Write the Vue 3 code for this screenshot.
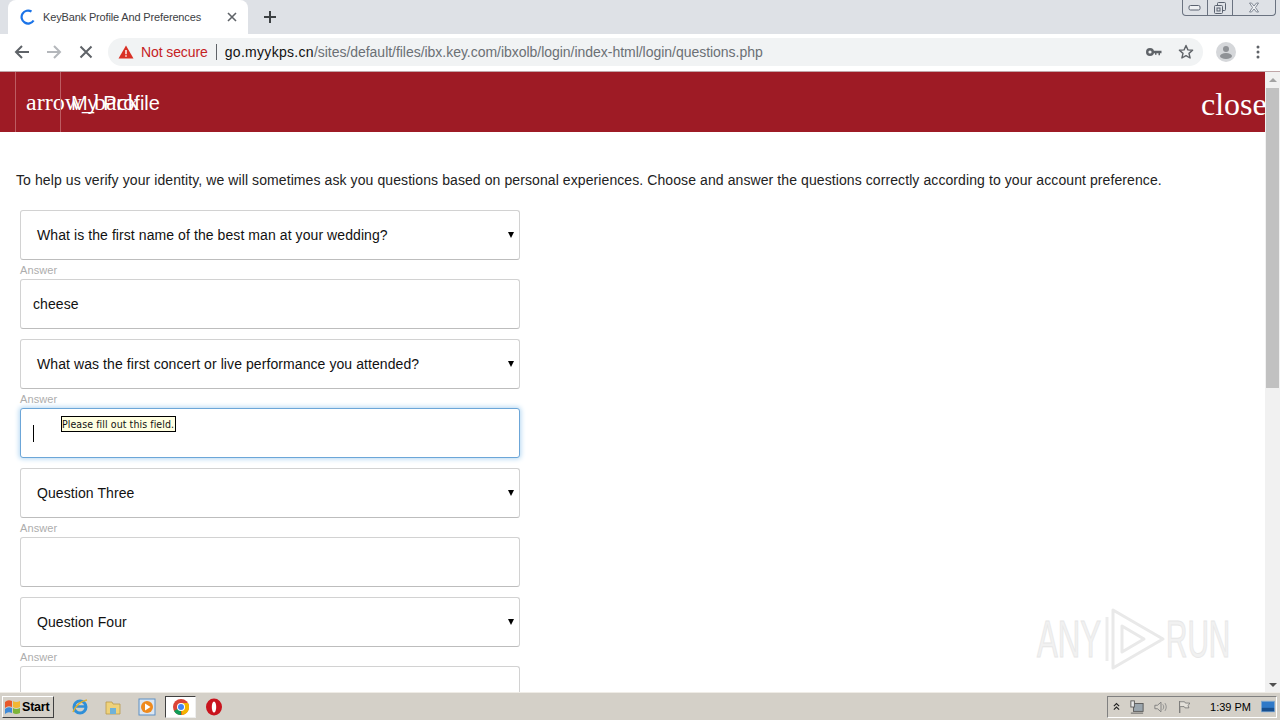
<script setup>
const blocks = [
  { q: 'What is the first name of the best man at your wedding?', a: 'cheese' },
  { q: 'What was the first concert or live performance you attended?', a: '', focus: true },
  { q: 'Question Three', a: '' },
  { q: 'Question Four', a: '' },
]
</script>

<template>
  <div class="screen">
    <div class="tabstrip">
      <div class="tab">
        <svg class="spinner" width="16" height="16" viewBox="0 0 16 16"><path d="M13.6 11.5A6.5 6.5 0 1 1 11.5 2.500" fill="none" stroke="#1a73e8" stroke-width="2.200"/></svg>
        <span class="tabtitle">KeyBank Profile And Preferences</span>
        <svg class="tabclose" width="10" height="10" viewBox="0 0 10 10"><path d="M1 1l8 8M9 1l-8 8" stroke="#5f6368" stroke-width="1.600"/></svg>
      </div>
      <svg class="newtab" width="14" height="14" viewBox="0 0 14 14"><path d="M7 1v12M1 7h12" stroke="#3c4043" stroke-width="2"/></svg>
      <div class="winctl">
        <div class="winbtn">
          <svg width="14" height="8" viewBox="0 0 14 8"><rect x="1" y="1.500" width="11" height="4.500" rx="1.500" fill="#eef0f3" stroke="#5a6270"/></svg>
        </div>
        <div class="winbtn">
          <svg width="14" height="14" viewBox="0 0 14 14"><rect x="4.500" y="1.500" width="8" height="8" rx="1" fill="none" stroke="#5a6270"/><rect x="1.500" y="4.500" width="8" height="8" rx="1" fill="#dee1e6" stroke="#5a6270"/><rect x="4" y="7" width="3" height="3" fill="none" stroke="#5a6270"/></svg>
        </div>
        <div class="winbtn wide">
          <svg width="12" height="11" viewBox="0 0 12 11"><path d="M1.500 1h2L6 4l2.500-3h2L7.500 5.500l3 4.500h-2L6 7l-2.500 3h-2l3-4.500z" fill="#eef0f3" stroke="#6a7280" stroke-width=".8"/></svg>
        </div>
      </div>
    </div>

    <div class="toolbar">
      <svg class="navicon" width="16" height="16" viewBox="0 0 16 16"><path d="M15 8H2M8 2L2 8l6 6" fill="none" stroke="#5f6368" stroke-width="2"/></svg>
      <svg class="navicon" width="16" height="16" viewBox="0 0 16 16"><path d="M1 8h13M8 2l6 6-6 6" fill="none" stroke="#b4b7bb" stroke-width="2"/></svg>
      <svg class="navicon" width="16" height="16" viewBox="0 0 16 16"><path d="M2.500 2.500l11 11M13.500 2.500l-11 11" fill="none" stroke="#5f6368" stroke-width="2"/></svg>
      <div class="omnibox">
        <svg class="warn" width="16" height="14" viewBox="0 0 16 14"><path d="M8 0.500L15.500 13.500H0.500z" fill="#d93025"/><path d="M8 5v4.200M8 10.300v1.500" stroke="#fff" stroke-width="1.400"/></svg>
        <span class="notsecure">Not secure</span>
        <span class="divider"></span>
        <span class="url"><b>go.myykps.cn</b>/sites/default/files/ibx.key.com/ibxolb/login/index-html/login/questions.php</span>
        <svg class="key" width="16" height="10" viewBox="0 0 16 10"><circle cx="4" cy="5" r="2.800" fill="none" stroke="#5f6368" stroke-width="2.400"/><path d="M7 3.800h8.500v2.400h-1.500v2h-1.500v-2H10.500v1.500H9V6.200H7z" fill="#5f6368"/></svg>
        <svg class="star" width="16" height="16" viewBox="0 0 16 16"><path d="M8 1.500l1.900 4.400 4.700.4-3.600 3.100 1.100 4.600L8 11.600 3.900 14l1.100-4.600L1.400 6.300l4.700-.4z" fill="none" stroke="#5f6368" stroke-width="1.400" stroke-linejoin="round"/></svg>
      </div>
      <svg class="avatar" width="20" height="20" viewBox="0 0 20 20"><circle cx="10" cy="10" r="10" fill="#d5d7da"/><circle cx="10" cy="7" r="3" fill="#8f9296"/><ellipse cx="10" cy="14" rx="6" ry="3" fill="#8f9296"/></svg>
      <svg class="dots" width="4" height="14" viewBox="0 0 4 14"><circle cx="2" cy="2" r="1.500" fill="#5f6368"/><circle cx="2" cy="7" r="1.500" fill="#5f6368"/><circle cx="2" cy="12" r="1.500" fill="#5f6368"/></svg>
    </div>

    <div class="viewport">
      <div class="page">
        <header class="head">
          <div class="headcell"><span class="ligature">arrow_back</span></div>
          <div class="headcell title"><span>My Profile</span></div>
          <div class="closeword">close</div>
        </header>
        <p class="intro">To help us verify your identity, we will sometimes ask you questions based on personal experiences. Choose and answer the questions correctly according to your account preference.</p>
        <form class="form">
          <div v-for="b in blocks" :key="b.q" class="block">
            <div class="select">
              <span>{{ b.q }}</span>
              <i class="caret"></i>
            </div>
            <div class="label">Answer</div>
            <div class="answer" :class="{ focus: b.focus }">
              <span v-if="b.a">{{ b.a }}</span>
              <i v-if="b.focus" class="cursor"></i>
              <div v-if="b.focus" class="tooltip">Please fill out this field.</div>
            </div>
          </div>
        </form>
        <div class="watermark">
          <span class="wm-text any">ANY</span>
          <svg width="64" height="64" viewBox="0 0 64 64"><path d="M11 3v58l50-29zM20 19v26l22-13z" fill="none" stroke="#e9e9e9" stroke-width="3" stroke-linejoin="round"/><path d="M5 10v44" stroke="#ececec" stroke-width="3"/></svg>
          <span class="wm-text run">RUN</span>
        </div>
      </div>
      <div class="scrollbar">
        <i class="arrow up"></i>
        <div class="thumb"></div>
        <i class="arrow down"></i>
      </div>
    </div>

    <div class="taskbar">
      <div class="start">
        <svg width="17" height="17" viewBox="0 0 17 17"><path d="M1 4q3-3 7-1v6q-4-2-7 1z" fill="#e8582a"/><path d="M9 3q3 2 7 0v6q-4 2-7 0z" fill="#f2b632"/><path d="M1 11q3-3 7-1v5q-4-2-7 1z" fill="#3f8ad8"/><path d="M9 10q3 2 7 0v5q-4 2-7 0z" fill="#7db53a"/></svg>
        <span>Start</span>
      </div>
      <div class="tasks">
        <svg width="18" height="18" viewBox="0 0 18 18"><circle cx="9" cy="9" r="6" fill="none" stroke="#2f8fd8" stroke-width="3"/><path d="M4 8.500h10" stroke="#2f8fd8" stroke-width="2.500"/><path d="M2 14c3-7 8-11 14-12" fill="none" stroke="#e0b030" stroke-width="1.500"/></svg>
        <svg width="18" height="18" viewBox="0 0 18 18"><path d="M2 4h6l1 2h7v10H2z" fill="#efd27a" stroke="#b99a4c" stroke-width=".8"/><path d="M6 10h6v6H6z" fill="#6fb2d8"/></svg>
        <svg class="media" width="18" height="18" viewBox="0 0 18 18"><rect x="1" y="1" width="16" height="16" fill="#dbe6f2" stroke="#5d8fc4"/><circle cx="9" cy="9" r="6" fill="#ef8a1d"/><path d="M7 5.500v7l5.500-3.500z" fill="#fff"/></svg>
        <div class="active">
          <svg width="16" height="16" viewBox="0 0 16 16"><circle cx="8" cy="8" r="8" fill="#db4437"/><path d="M8 8L1 12a8 8 0 0 0 7 4z" fill="#0f9d58"/><path d="M8 4h7a8 8 0 0 1-6 12l-1-8z" fill="#f4b400"/><circle cx="8" cy="8" r="4" fill="#fff"/><circle cx="8" cy="8" r="3" fill="#4285f4"/></svg>
        </div>
        <svg class="opera" width="16" height="18" viewBox="0 0 16 18"><ellipse cx="8" cy="9" rx="8" ry="8.500" fill="#c9141e"/><ellipse cx="8" cy="9" rx="2.200" ry="5.500" fill="#fff"/></svg>
      </div>
      <div class="tray">
        <svg width="8" height="10" viewBox="0 0 8 10"><path d="M1 4l3-3 3 3M1 8l3-3 3 3" fill="none" stroke="#222" stroke-width="1.300"/></svg>
        <svg width="16" height="16" viewBox="0 0 16 16"><rect x="4" y="4" width="11" height="9" fill="#9aa5ad" stroke="#555"/><rect x="1" y="1" width="4" height="7" fill="#e8e8e8" stroke="#555"/><path d="M1 15h14" stroke="#555"/></svg>
        <svg width="16" height="16" viewBox="0 0 16 16"><path d="M1 6h3l4-3.500v11L4 10H1z" fill="#d8d4cc" stroke="#7a7a7a"/><path d="M10 5c1.500 2 1.500 4 0 6M12.500 3.500c2 3 2 6 0 9" fill="none" stroke="#8a8a8a"/></svg>
        <svg width="15" height="16" viewBox="0 0 15 16"><path d="M2 1v14" stroke="#666" stroke-width="1.200"/><path d="M2.500 2h5l1 1.500h5l-2 3 1 2.500H8L7 7.500H2.500" fill="#e4e1da" stroke="#666" stroke-width=".8"/></svg>
        <span class="clock">1:39 PM</span>
        <svg width="16" height="13" viewBox="0 0 16 13"><rect x="0.500" y="0.500" width="15" height="12" fill="#2f79c8" stroke="#7fa7cf"/><path d="M1 8h14v4H1z" fill="#174f8f"/></svg>
      </div>
    </div>
  </div>
</template>

<style>
html, body { margin: 0; overflow: hidden; background: #fff; }
</style>

<style scoped>
* { box-sizing: border-box; }
.screen {
  width: 1280px; height: 720px; display: flex; flex-direction: column; overflow: hidden;
  font-family: "Liberation Sans", Arial, sans-serif; background: #fff; color: #000;
}
.tabstrip { height: 34px; flex: none; background: #dee1e6; display: flex; align-items: flex-start; padding-left: 8px; position: relative; }
.tab {
  width: 240px; height: 34px; background: #fff; border-radius: 8px 8px 0 0; display: flex; align-items: center;
  padding: 0 11px 0 12px;
}
.tabtitle { font: 11px "Liberation Sans", sans-serif; letter-spacing: -.15px; color: #3c4043; margin-left: 7px; flex: 1; white-space: nowrap; }
.newtab { margin: 10px 0 0 15px; }
.winctl {
  margin-left: auto; margin-right: 4px; height: 16px; display: flex; border: 1px solid #6a7280; border-top: none;
  border-radius: 0 0 4px 4px;
}
.winbtn { width: 25px; display: flex; align-items: center; justify-content: center; border-right: 1px solid #6a7280; }
.winbtn.wide { width: 42px; border-right: none; }
.toolbar {
  height: 38px; flex: none; background: #fff; border-bottom: 1px solid #c0a6a8; display: flex; align-items: center;
  padding: 0 20px 1px 14px;
}
.navicon { margin-right: 16px; }
.omnibox {
  width: 1095px; height: 28px; margin-left: -2px; background: #f1f3f4; border-radius: 14px; display: flex; align-items: center;
  padding: 0 9px 0 10px; font-size: 14px; white-space: nowrap;
}
.notsecure { color: #c5221f; margin-left: 7px; letter-spacing: -.1px; }
.divider { width: 1px; height: 16px; background: #5f6368; margin: 0 8px 0 8px; }
.url { color: #6b7075; flex: 1; letter-spacing: -.03px; }
.url b { font-weight: 400; color: #111; letter-spacing: .3px; }
.key { margin-right: 16px; }
.avatar { margin-left: 13px; }
.dots { margin-left: 20px; }
.viewport { flex: 1; min-height: 0; display: flex; }
.page { flex: 1; min-width: 0; overflow: hidden; position: relative; background: #fff; }
.head { height: 60px; background: #9e1b25; color: #fff; display: flex; padding-left: 15px; position: relative; }
.headcell { width: 45px; border-left: 1px solid #bd5c62; padding: 17px 0 0 10px; white-space: nowrap; }
.ligature { font: 24px "Liberation Serif", serif; }
.title { font-size: 20px; padding-top: 20px; }
.closeword { position: absolute; left: 1201px; top: 14px; font: 32px "Liberation Serif", serif; white-space: nowrap; }
.intro { margin: 40px 0 0 16px; font-size: 14px; line-height: 16px; letter-spacing: .09px; white-space: nowrap; color: #222; }
.form { margin: 22px 0 0 20px; width: 500px; }
.block { margin-bottom: 10px; }
.select, .answer {
  height: 50px; border: 1px solid #d2d2d2; border-bottom-color: #bdbdbd; border-radius: 3px; background: #fff; display: flex; align-items: center; position: relative;
  font-size: 14px; letter-spacing: .08px; color: #111;
}
.select { padding: 0 16px; justify-content: space-between; }
.caret { border-left: 3.500px solid transparent; border-right: 3.500px solid transparent; border-top: 6px solid #000; margin-right: -11px; }
.label { height: 19px; font-size: 11px; line-height: 20px; color: #adadad; letter-spacing: .1px; }
.answer { padding: 0 12px; }
.answer.focus { border-color: #6ca6d8; box-shadow: 0 0 5px 1px #b5d8f2; }
.cursor { width: 1px; height: 17px; background: #000; }
.tooltip {
  position: absolute; left: 40px; top: 7px; width: 115px; height: 16px; background: #ffffe1; border: 1px solid #000;
  font: 10.500px/14px "DejaVu Sans Condensed", "DejaVu Sans", sans-serif; white-space: nowrap; overflow: hidden;
}
.watermark { position: absolute; left: 1037px; top: 535px; display: flex; align-items: center; pointer-events: none; }
.wm-text { font-size: 52px; color: #f1f1f1; -webkit-text-stroke: 1px #e7e7e7; display: inline-block; white-space: nowrap; transform-origin: left center; }
.wm-text.any { width: 65px; transform: scaleX(.6); }
.wm-text.run { width: 66px; transform: scaleX(.57); }
.scrollbar { width: 15px; flex: none; background: #f1f1f1; display: flex; flex-direction: column; align-items: center; }
.arrow { width: 0; height: 0; border-left: 4px solid transparent; border-right: 4px solid transparent; margin: 6px 0 0; }
.arrow.up { border-bottom: 4px solid #a3a3a3; margin-bottom: 6px; }
.arrow.down { border-top: 4px solid #505050; margin: auto 0 5px; }
.thumb { width: 13px; height: 300px; background: #c1c1c1; }
.taskbar {
  height: 28px; flex: none; background: #d4d0c8; border-top: 1px solid #efece6; display: flex; align-items: center; padding: 0 3px 0 2px;
}
.start {
  width: 52px; height: 22px; display: flex; align-items: center; gap: 1px; padding-left: 1px; background: #d4d0c8;
  border: 1px solid; border-color: #fff #404040 #404040 #fff; font: 700 12.500px "Liberation Sans", sans-serif; letter-spacing: -.2px;
}
.tasks { display: flex; align-items: center; margin-left: 17px; gap: 15px; }
.media { margin-left: 1px; }
.active {
  width: 31px; height: 22px; display: flex; align-items: center; justify-content: center; background: #fff;
  border: 1px solid; border-color: #404040 #eee #eee #404040; margin: 0 -7px 0 -6px;
}
.opera { margin-left: 2px; }
.tray {
  margin-left: auto; width: 170px; height: 22px; display: flex; align-items: center; gap: 10px; padding: 0 1px 0 5px;
  border: 1px solid; border-color: #808080 #fff #fff #808080;
}
.clock { font: 11px "Liberation Sans", sans-serif; margin-left: 9px; white-space: nowrap; }
</style>
